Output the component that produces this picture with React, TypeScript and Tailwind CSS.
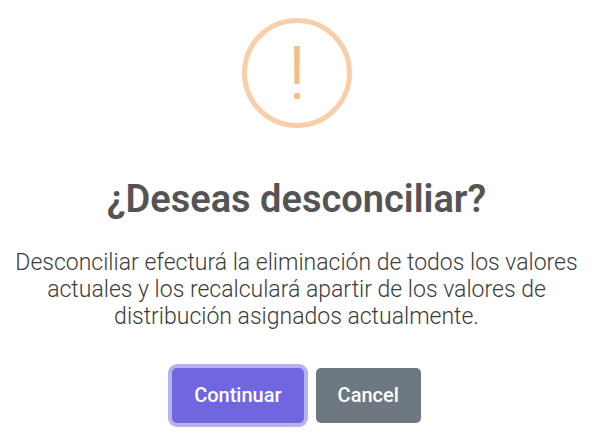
export default function App() {
  return (
    <div
      role="alertdialog"
      aria-labelledby="dialog-title"
      aria-describedby="dialog-text"
      className="flex w-full flex-col items-center bg-white pt-[18px] pr-4 pb-2 pl-3 text-center font-[Roboto,sans-serif] text-[#545454]"
    >
      <svg viewBox="0 0 110 110" className="size-[110px]" aria-hidden="true">
        <circle cx="55" cy="55" r="52.5" fill="none" stroke="#facea8" strokeWidth="5" />
        <path d="M52.2 28h5.6l-.4 38h-5z" fill="#f8bb86" />
        <circle cx="55" cy="78" r="3.3" fill="#f8bb86" />
      </svg>
      <h2 id="dialog-title" className="mt-[49px] text-[38px] leading-[44px] font-semibold">
        ¿Deseas desconciliar?
      </h2>
      <p id="dialog-text" className="mt-7 text-[23px] leading-[27px] font-light text-[#3c3c3c]">
        Desconciliar efecturá la eliminación de todos los valores actuales y los recalculará apartir de los valores de distribución asignados actualmente.
      </p>
      <div className="mt-[38px] flex justify-center gap-3 text-xl font-medium text-white">
        <button type="button" className="h-[55px] rounded-[5px] bg-[#7066e0] px-[22px] pb-0.5 ring-4 ring-[#b7b2ef]">
          Continuar
        </button>
        <button type="button" className="h-[55px] rounded-[5px] bg-[#6e7881] px-[22px] pb-0.5">
          Cancel
        </button>
      </div>
    </div>
  );
}
